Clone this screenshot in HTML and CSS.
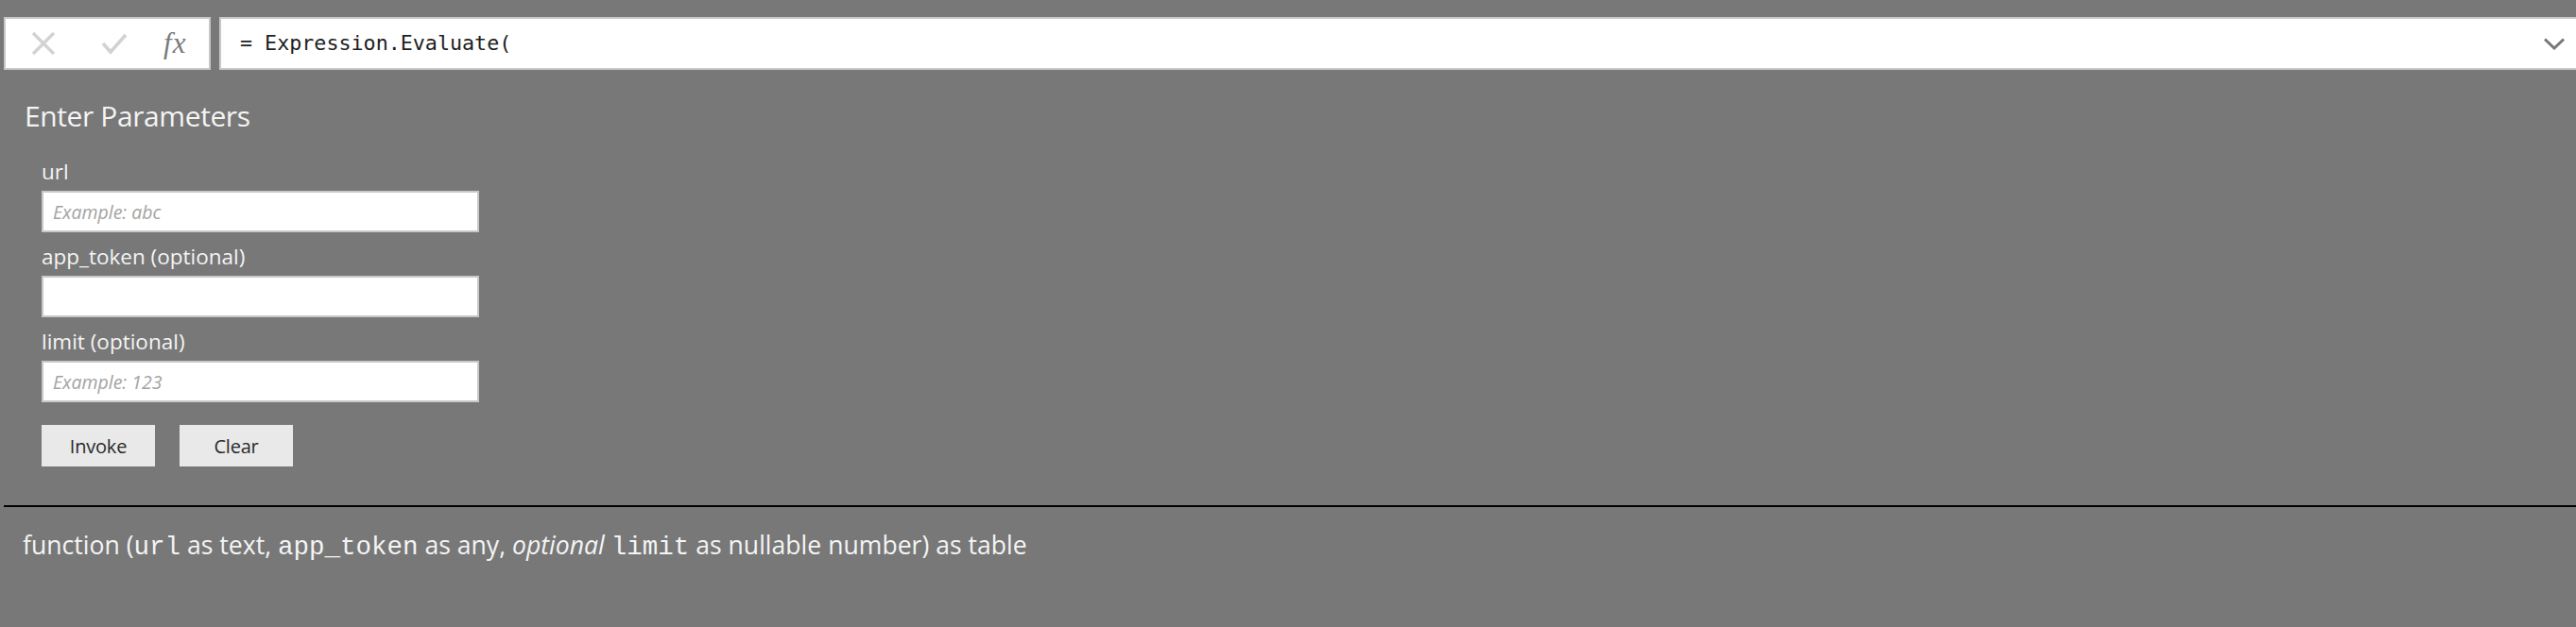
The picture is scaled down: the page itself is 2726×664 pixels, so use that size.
FILE: index.html
```html
<!DOCTYPE html>
<html>
<head>
<meta charset="utf-8">
<link rel="stylesheet" href="styles.css">
</head>
<body>
<div class="formula-bar">
  <div class="fx-box">
    <svg class="ico-x" width="28" height="28" viewBox="0 0 28 28"><path d="M3 3 L25 25 M25 3 L3 25" stroke="#d2d2d2" stroke-width="3.2" fill="none"/></svg>
    <svg class="ico-check" width="28" height="24" viewBox="0 0 28 24"><polyline points="2,12 10,21 26,3" stroke="#d2d2d2" stroke-width="3.6" fill="none"/></svg>
    <span class="fx"><i>f</i><i>x</i></span>
  </div>
  <div class="formula">
    <span class="formula-text">= Expression.Evaluate(</span>
    <svg class="chevron" width="22" height="13" viewBox="0 0 22 13"><polyline points="1,1.5 11,11 21,1.5" stroke="#777" stroke-width="3" fill="none"/></svg>
  </div>
</div>

<div class="params">
  <div class="title">Enter Parameters</div>
  <div class="fields">
    <label class="lbl">url</label>
    <input class="inp" placeholder="Example: abc">
    <label class="lbl">app_token (optional)</label>
    <input class="inp">
    <label class="lbl">limit (optional)</label>
    <input class="inp" placeholder="Example: 123">
    <div class="buttons">
      <button class="btn">Invoke</button>
      <button class="btn">Clear</button>
    </div>
  </div>
</div>

<div class="sep"></div>

<div class="signature">function (<code>url</code> as text, <code>app_token</code> as any, <em>optional</em> <code>limit</code> as nullable number) as table</div>
</body>
</html>
```

FILE: styles.css
```css
html, body {
  margin: 0;
  padding: 0;
  background: #787878;
  width: 2726px;
  height: 664px;
  overflow: hidden;
  font-family: "Open Sans", "Noto Sans", sans-serif;
}

.formula-bar {
  display: flex;
  gap: 9px;
  padding: 18px 0 0 4px;
  height: 56px;
}

.fx-box {
  box-sizing: border-box;
  width: 219px;
  height: 56px;
  background: #fff;
  border: 2px solid #c8c8c8;
  display: flex;
  align-items: center;
  padding-left: 26px;
}

.ico-x { margin-right: 47px; }
.ico-check { margin-right: 38px; }

.fx {
  font-family: "Liberation Serif", "DejaVu Serif", serif;
  font-size: 31px;
  color: #7a7a7a;
  line-height: 1;
  margin-top: -2px;
}
.fx i { font-style: italic; }
.fx i:first-child { margin-right: 1px; }

.formula {
  box-sizing: border-box;
  flex: 1;
  height: 56px;
  background: #fff;
  border: 2px solid #c8c8c8;
  border-right: none;
  display: flex;
  align-items: center;
  padding-left: 20px;
  padding-right: 12px;
}

.formula-text {
  flex: 1;
  font-family: "DejaVu Sans Mono", "Liberation Mono", monospace;
  font-size: 21.7px;
  color: #1e1e1e;
  white-space: pre;
  margin-top: -1px;
}

.chevron { display: block; margin-top: 1px; }

.params {
  padding: 31px 0 0 26px;
}

.title {
  font-size: 30px;
  line-height: 36px;
  color: #f4f4f4;
  font-weight: 400;
  letter-spacing: -0.4px;
}

.fields {
  display: flex;
  flex-direction: column;
  align-items: flex-start;
  padding: 27px 0 0 18px;
}

.lbl {
  font-size: 22.5px;
  line-height: 28px;
  color: #f4f4f4;
  margin-bottom: 6px;
}

.inp {
  box-sizing: border-box;
  width: 463px;
  height: 44px;
  margin: 0 0 12px 0;
  border: 2px solid #c8c8c8;
  background: #fff;
  padding: 0 10px;
  font-family: "Open Sans", "Noto Sans", sans-serif;
  font-size: 19.5px;
  outline: none;
}
.inp::placeholder {
  color: #a3a3a3;
  font-style: italic;
}

.buttons {
  display: flex;
  gap: 26px;
  margin-top: 12px;
}

.btn {
  box-sizing: border-box;
  width: 120px;
  height: 44px;
  border: none;
  background: #e9e9e9;
  color: #2a2a2a;
  font-family: "Open Sans", "Noto Sans", sans-serif;
  font-size: 20px;
  padding: 0;
  letter-spacing: -0.2px;
}

.sep {
  height: 2px;
  background: #000;
  margin: 41px 0 0 4px;
}

.signature {
  padding: 24px 0 0 24px;
  font-size: 26.6px;
  line-height: 32px;
  color: #f4f4f4;
  white-space: nowrap;
}
.signature code {
  font-family: "Liberation Mono", "Courier New", monospace;
  font-size: 27.5px;
  font-weight: 300;
}
.signature em { font-style: italic; }
```
